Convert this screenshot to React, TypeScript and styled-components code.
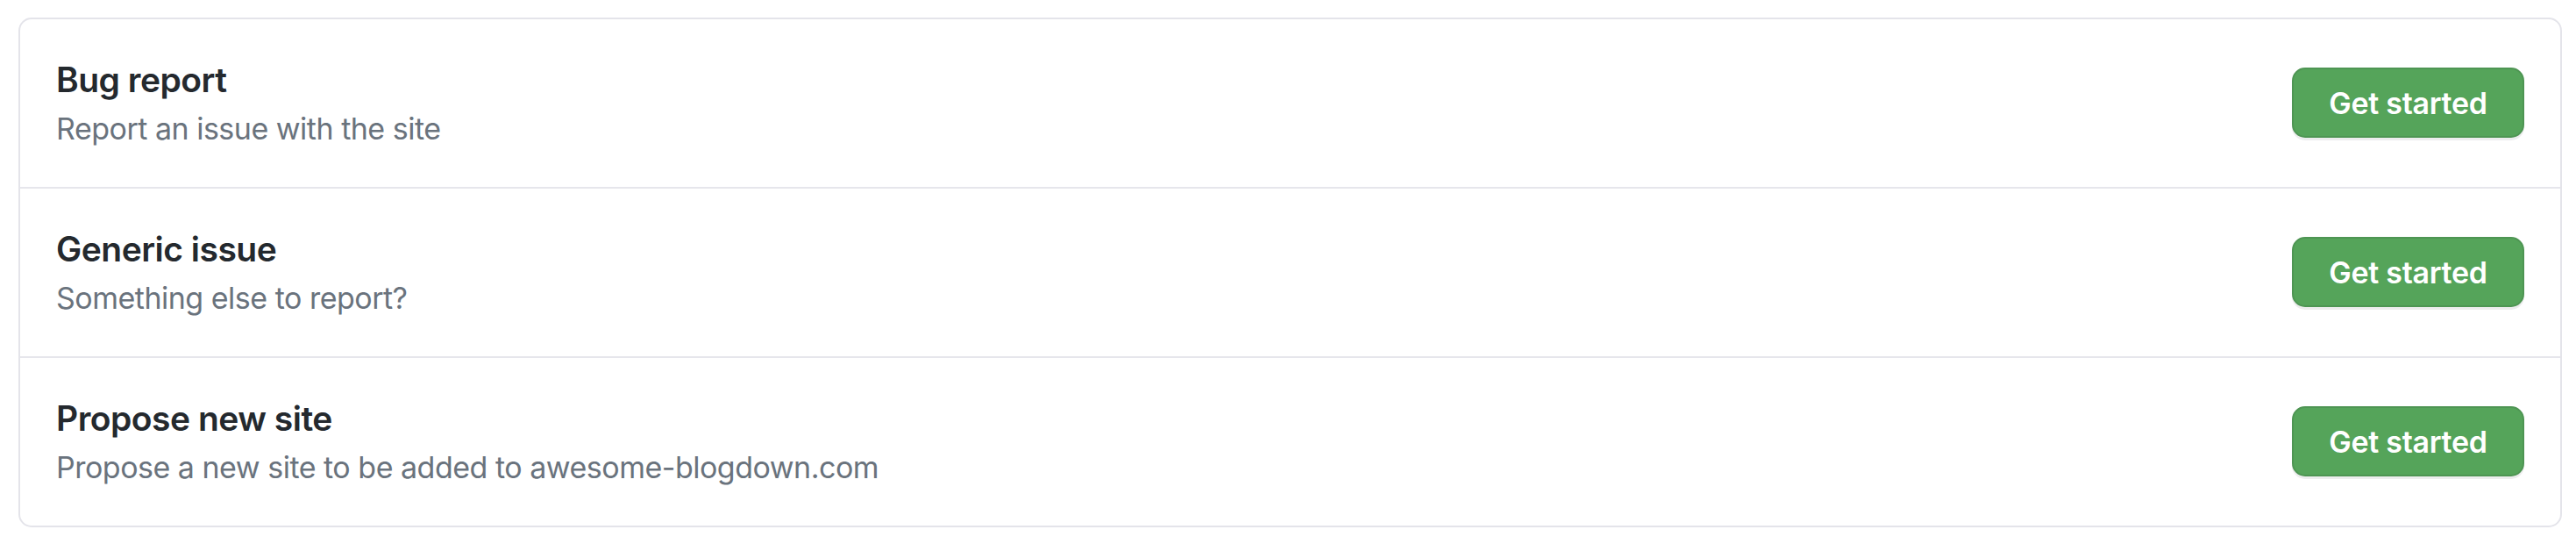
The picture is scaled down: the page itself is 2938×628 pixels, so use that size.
import styled, { createGlobalStyle } from "styled-components";

const GlobalStyle = createGlobalStyle`
    body {
        margin: 0;
        background: #ffffff;
        font-family: Inter, "Noto Sans", "Liberation Sans", sans-serif;
        -webkit-font-smoothing: antialiased;
    }
`

type Template = {
    title: string
    description: string
}

const templates: Template[] = [
    {title: "Bug report", description: "Report an issue with the site"},
    {title: "Generic issue", description: "Something else to report?"},
    {title: "Propose new site", description: "Propose a new site to be added to awesome-blogdown.com"},
]

export default function App() {
    return (
        <>
            <GlobalStyle/>
            <Page>
                <TemplateList>
                    {templates.map((t) => (
                        <TemplateRow key={t.title}>
                            <TemplateInfo>
                                <TemplateTitle>{t.title}</TemplateTitle>
                                <TemplateDescription>{t.description}</TemplateDescription>
                            </TemplateInfo>
                            <StartButton type="button">Get started</StartButton>
                        </TemplateRow>
                    ))}
                </TemplateList>
            </Page>
        </>
    )
}

const Page = styled.main`
    padding: 20px 16px 0 21px;
`

const TemplateList = styled.ul`
    margin: 0;
    padding: 0;
    list-style: none;
    border: 2px solid #e4e4ea;
    border-radius: 15px;
    overflow: hidden;
`

const TemplateRow = styled.li`
    display: flex;
    align-items: center;
    justify-content: space-between;
    padding: 39px 41px 40px 41px;

    & + & {
        border-top: 2px solid #e6e6ec;
    }
`

const TemplateInfo = styled.div`
    display: flex;
    flex-direction: column;
`

const TemplateTitle = styled.h3`
    margin: 0;
    font-size: 39px;
    line-height: 60px;
    font-weight: 600;
    letter-spacing: -0.5px;
    color: #24292e;
`

const TemplateDescription = styled.p`
    margin: 0;
    font-size: 34px;
    line-height: 52px;
    letter-spacing: -0.5px;
    color: #6a737d;
`

const StartButton = styled.button`
    width: 265px;
    height: 80px;
    padding: 0;
    border: 2px solid #4e9553;
    border-radius: 15px;
    background: #55a45a;
    box-shadow: 0 3px 0 rgba(27, 31, 35, 0.08);
    color: #ffffff;
    font-family: inherit;
    font-size: 34px;
    font-weight: 600;
    letter-spacing: -0.3px;
    cursor: pointer;
`
